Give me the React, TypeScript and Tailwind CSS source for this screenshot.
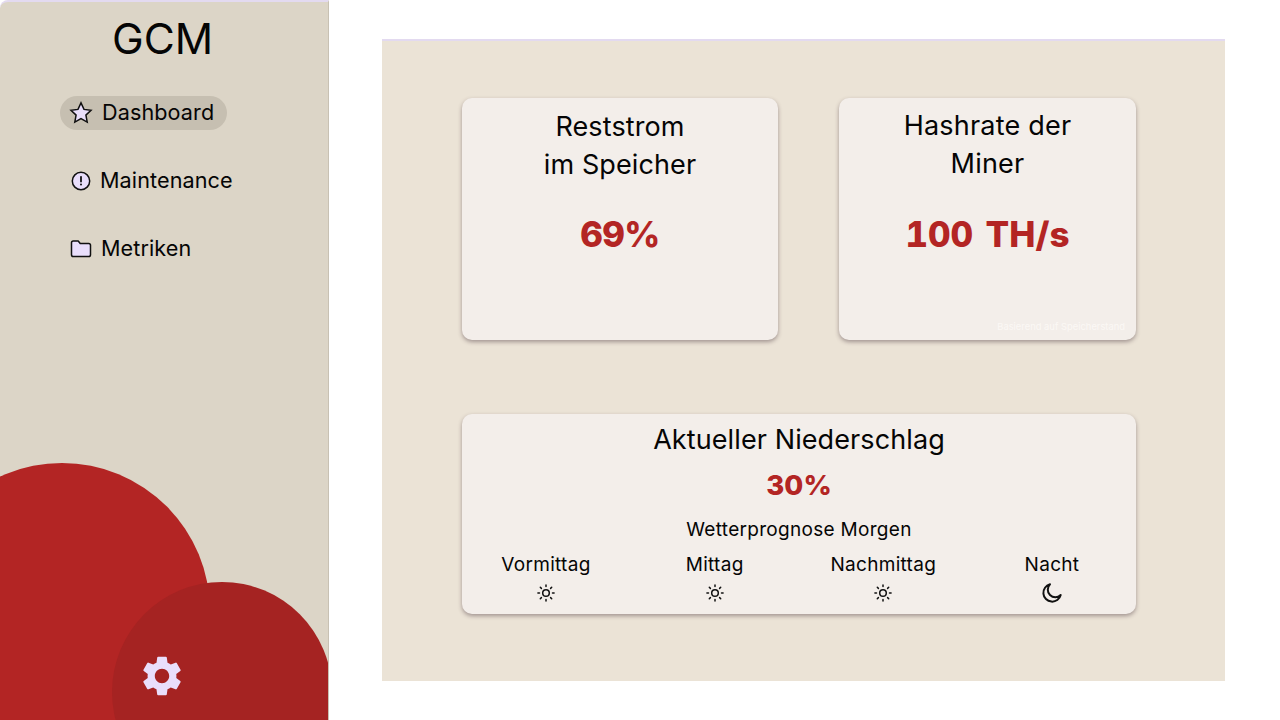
import React from "react";
import { MdSettings } from "react-icons/md";

const purple = "#e9defb";

function Star() {
  return (
    <svg width="24" height="24" viewBox="0 0 24 24" fill={purple} stroke="#111" strokeWidth="1.5" strokeLinejoin="miter">
      <path d="M12 1.900l3 6.500 7 .9-5.100 4.800 1.300 7L12 17.600l-6.200 3.500 1.300-7L2 9.300l7-.9z" />
    </svg>
  );
}
function Alert() {
  return (
    <svg width="20" height="20" viewBox="0 0 20 20" fill="none">
      <circle cx="10" cy="10" r="8.700" fill={purple} stroke="#111" strokeWidth="1.500" />
      <path d="M10 5.800v4.800" stroke="#111" strokeWidth="1.800" strokeLinecap="round" />
      <circle cx="10" cy="13.600" r="1" fill="#111" />
    </svg>
  );
}
function Folder() {
  return (
    <svg width="22" height="18" viewBox="0 0 22 18" fill={purple} stroke="#111" strokeWidth="1.500" strokeLinejoin="round">
      <path d="M1.500 2.800c0-1 .8-1.800 1.800-1.800h4.900l2 2.500h8.500c1 0 1.800.8 1.800 1.800v9.400c0 1-.8 1.800-1.800 1.800H3.300c-1 0-1.800-.8-1.800-1.800z" />
    </svg>
  );
}
function Sun() {
  return (
    <svg width="18" height="18" viewBox="0 0 18 18" fill="none" stroke="#111" strokeWidth="1.500" strokeLinecap="round">
      <circle cx="9" cy="9" r="3.300" />
      <path d="M9 .9v1.600M9 15.500v1.600M.9 9h1.600M15.500 9h1.600M3.300 3.300l1.100 1.100M13.600 13.600l1.100 1.100M3.300 14.700l1.100-1.100M13.600 4.400l1.100-1.100" />
    </svg>
  );
}
function Moon() {
  return (
    <svg width="20" height="20" viewBox="0 0 20 20" fill="none" stroke="#111" strokeWidth="2" strokeLinejoin="round">
      <path d="M8 1.300a8.800 8.800 0 1 0 10.700 10.700A7.300 7.300 0 0 1 8 1.300z" />
    </svg>
  );
}

function Forecast({ label, icon }: { label: string; icon: React.ReactNode }) {
  return (
    <div className="flex w-[120px] flex-col items-center">
      <span className="text-[19px] leading-[24px] tracking-[0.3px]">{label}</span>
      <span className="mt-[6px] flex h-[20px] items-center justify-center">{icon}</span>
    </div>
  );
}

const cardClass =
  "rounded-[10px] bg-[#f3eeea] shadow-[0_2px_4px_rgba(70,50,60,0.45)]";

export default function App() {
  return (
    <div
      className="flex h-[720px] w-[1280px] overflow-hidden bg-white text-[#050505]"
      style={{ fontFamily: "Inter, 'Liberation Sans', sans-serif" }}
    >
      <aside className="relative h-[720px] w-[329px] shrink-0 overflow-hidden rounded-tl-[8px] border-t-2 border-r border-t-[#e3daf0] border-r-[#c8c1b3] bg-[#dcd5c7]">
        <h1 className="mt-[11px] pr-[3px] text-center text-[42.5px] font-normal leading-[52px]">GCM</h1>
        <nav className="mt-[31px] flex flex-col items-start pl-[60px]">
          <div className="flex h-[34px] w-[167px] items-center rounded-full bg-[#c6bfb1] pl-[9px]">
            <Star />
            <span className="ml-[9px] text-[21.6px] leading-none tracking-[0.1px]">Dashboard</span>
          </div>
          <div className="mt-[34px] flex h-[34px] items-center pl-[11px]">
            <Alert />
            <span className="ml-[9px] text-[21.6px] leading-none tracking-[0.1px]">Maintenance</span>
          </div>
          <div className="mt-[34px] flex h-[34px] items-center pl-[10px]">
            <Folder />
            <span className="ml-[9px] text-[21.6px] leading-none tracking-[0.1px]">Metriken</span>
          </div>
        </nav>
        <div className="absolute left-[-86px] top-[461px] h-[296px] w-[296px] rounded-full bg-[#b32524]" />
        <div className="absolute left-[112px] top-[580px] h-[220px] w-[220px] rounded-full bg-[#a52322]" />
        <MdSettings className="absolute left-[138px] top-[650px]" size={48} color={purple} />
      </aside>
      <main className="pl-[53px] pt-[39px]">
        <div className="h-[642px] w-[843px] border-t-2 border-t-[#e3daf0] bg-[#ebe3d6] pl-[80px] pt-[57px]">
          <div className="flex gap-[61px]">
            <section className={`${cardClass} h-[242px] w-[316px] pt-[10px] text-center`}>
              <p className="text-[27px] leading-[38px] tracking-[0.1px]">Reststrom<br />im Speicher</p>
              <p className="mt-[28px] text-[35px] font-extrabold leading-[44px] tracking-[-0.5px] tabular-nums text-[#b32524]">69%</p>
            </section>
            <section className={`${cardClass} relative h-[242px] w-[297px] pt-[9px] text-center`}>
              <p className="text-[27px] leading-[38px] tracking-[0.2px]">Hashrate der<br />Miner</p>
              <p className="mt-[29px] text-[35px] font-extrabold leading-[44px] tabular-nums text-[#b32524] [word-spacing:3px]">100 TH/s</p>
              <span className="absolute bottom-[7px] right-[11px] text-[9.4px] leading-[12px] text-[#fbf8f5]">Basierend auf Speicherstand</span>
            </section>
          </div>
          <section className={`${cardClass} mt-[74px] h-[200px] w-[674px] pt-[9px] text-center`}>
            <p className="text-[27px] leading-[34px] tracking-[0.1px]">Aktueller Niederschlag</p>
            <p className="mt-[10px] text-[27.5px] font-extrabold leading-[36px] text-[#b32524]">30%</p>
            <p className="mt-[15px] text-[19px] leading-[24px] tracking-[0.3px]">Wetterprognose Morgen</p>
            <div className="mt-[11px] flex justify-between px-[24px]">
              <Forecast label="Vormittag" icon={<Sun />} />
              <Forecast label="Mittag" icon={<Sun />} />
              <Forecast label="Nachmittag" icon={<Sun />} />
              <Forecast label="Nacht" icon={<Moon />} />
            </div>
          </section>
        </div>
      </main>
    </div>
  );
}
